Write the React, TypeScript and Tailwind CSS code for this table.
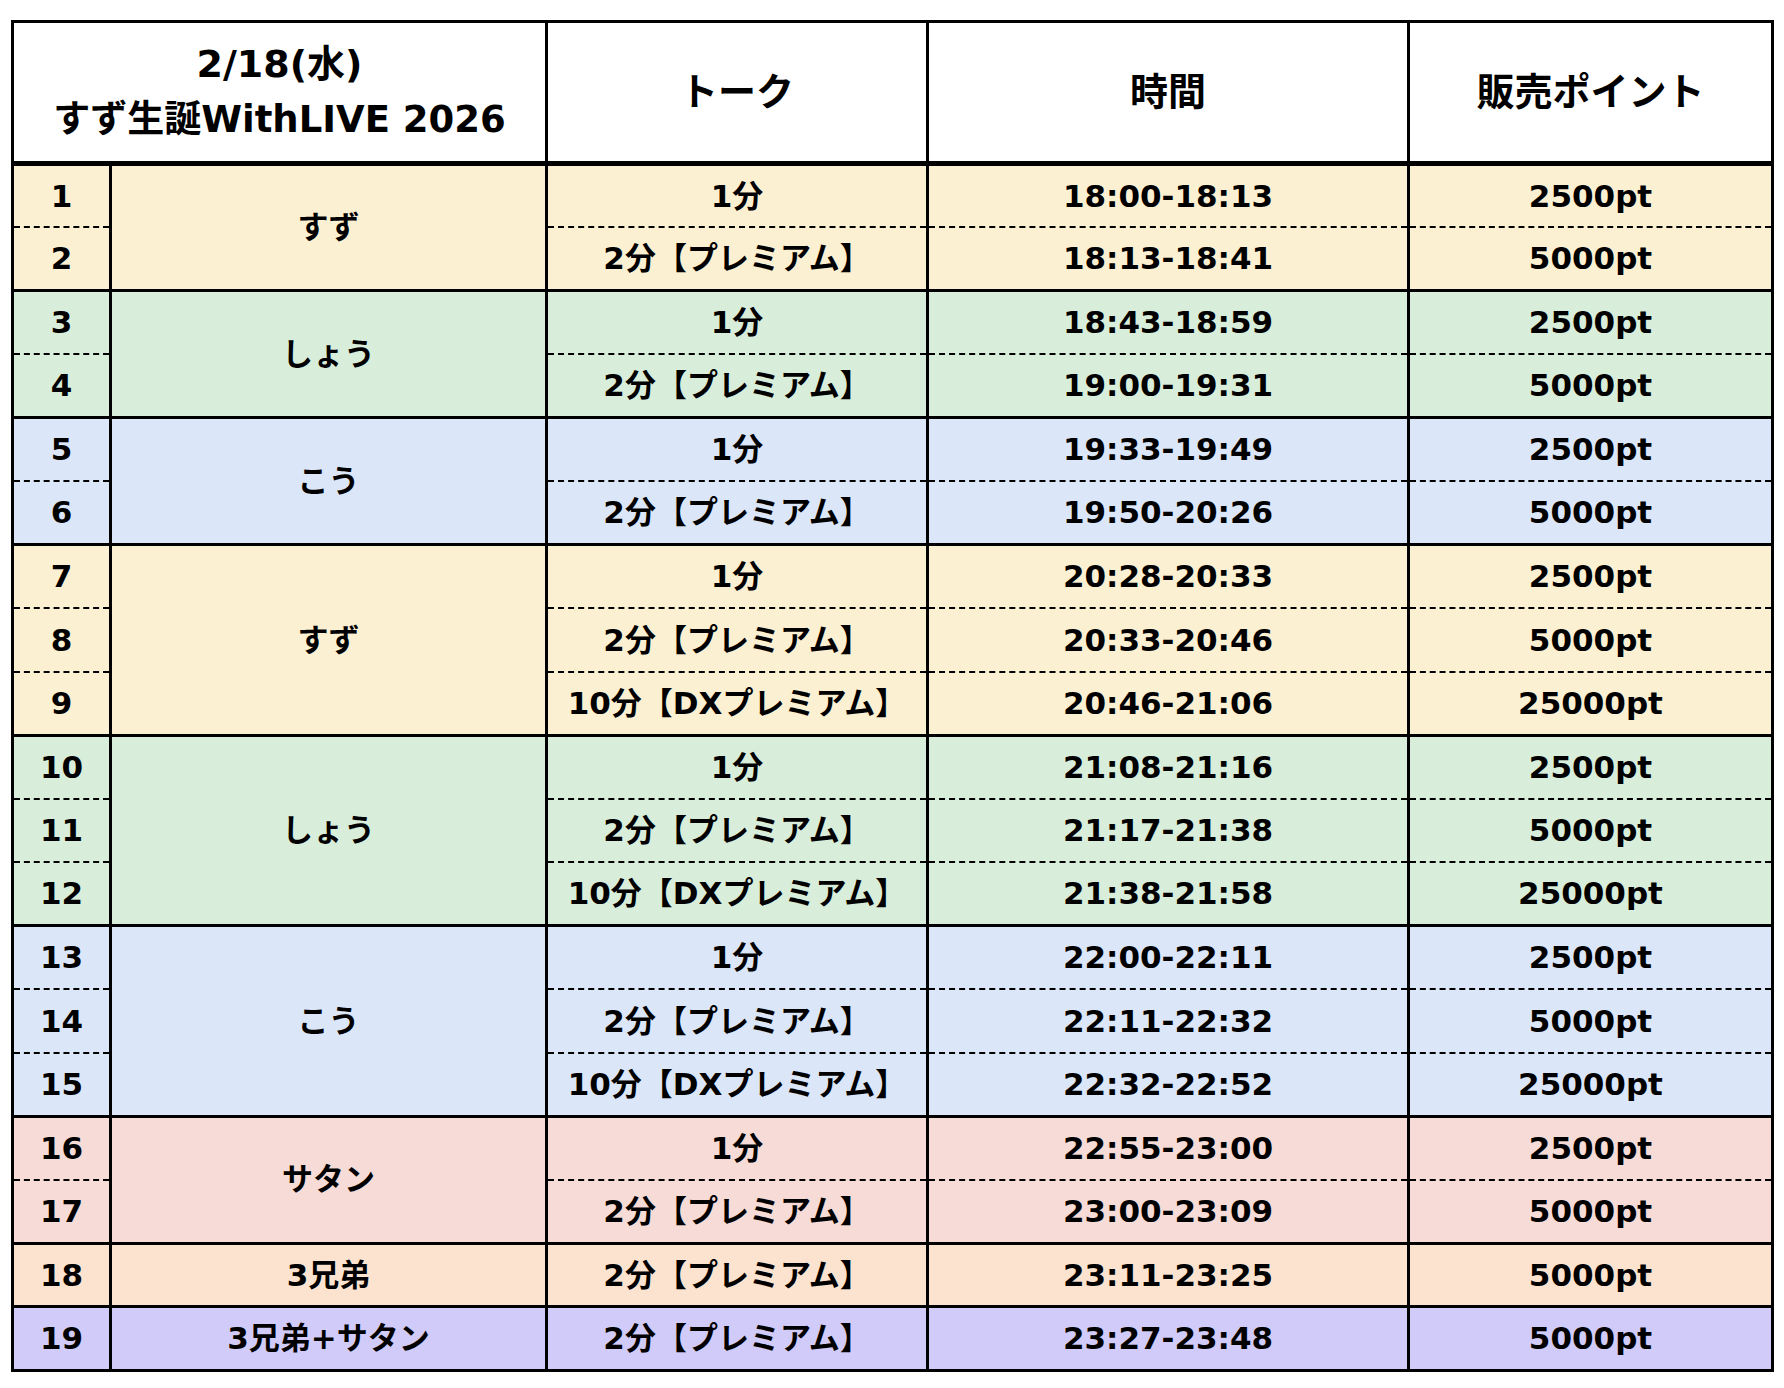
const groups = [
  {
    name: "すず",
    bg: "bg-[#fcf0d3]",
    rows: [
      ["1", "1分", "18:00-18:13", "2500pt"],
      ["2", "2分【プレミアム】", "18:13-18:41", "5000pt"],
    ],
  },
  {
    name: "しょう",
    bg: "bg-[#d8eedb]",
    rows: [
      ["3", "1分", "18:43-18:59", "2500pt"],
      ["4", "2分【プレミアム】", "19:00-19:31", "5000pt"],
    ],
  },
  {
    name: "こう",
    bg: "bg-[#dbe6f9]",
    rows: [
      ["5", "1分", "19:33-19:49", "2500pt"],
      ["6", "2分【プレミアム】", "19:50-20:26", "5000pt"],
    ],
  },
  {
    name: "すず",
    bg: "bg-[#fcf0d3]",
    rows: [
      ["7", "1分", "20:28-20:33", "2500pt"],
      ["8", "2分【プレミアム】", "20:33-20:46", "5000pt"],
      ["9", "10分【DXプレミアム】", "20:46-21:06", "25000pt"],
    ],
  },
  {
    name: "しょう",
    bg: "bg-[#d8eedb]",
    rows: [
      ["10", "1分", "21:08-21:16", "2500pt"],
      ["11", "2分【プレミアム】", "21:17-21:38", "5000pt"],
      ["12", "10分【DXプレミアム】", "21:38-21:58", "25000pt"],
    ],
  },
  {
    name: "こう",
    bg: "bg-[#dbe6f9]",
    rows: [
      ["13", "1分", "22:00-22:11", "2500pt"],
      ["14", "2分【プレミアム】", "22:11-22:32", "5000pt"],
      ["15", "10分【DXプレミアム】", "22:32-22:52", "25000pt"],
    ],
  },
  {
    name: "サタン",
    bg: "bg-[#f6dbd7]",
    rows: [
      ["16", "1分", "22:55-23:00", "2500pt"],
      ["17", "2分【プレミアム】", "23:00-23:09", "5000pt"],
    ],
  },
  {
    name: "3兄弟",
    bg: "bg-[#fbe3cf]",
    rows: [["18", "2分【プレミアム】", "23:11-23:25", "5000pt"]],
  },
  {
    name: "3兄弟+サタン",
    bg: "bg-[#d0cbf8]",
    rows: [["19", "2分【プレミアム】", "23:27-23:48", "5000pt"]],
  },
];

const App = () => {
  return (
    <div className="min-h-screen bg-white pl-[11px] pt-[20px] font-['DejaVu_Sans','Noto_Sans_CJK_JP',sans-serif] text-black">
      <table className="w-[1760px] table-fixed border-collapse border-[3px] border-black text-center font-bold">
        <colgroup>
          <col className="w-[98px]" />
          <col className="w-[436px]" />
          <col className="w-[381px]" />
          <col className="w-[481px]" />
          <col className="w-[364px]" />
        </colgroup>
        <thead>
          <tr className="h-[142px] bg-white">
            <th colSpan={2} className="border-r-[3px] border-b-[5px] border-black align-middle leading-[56px]">
              <div className="text-[38px]">2/18(水)</div>
              <div className="text-[37px]">すず生誕WithLIVE 2026</div>
            </th>
            <th className="border-r-[3px] border-b-[5px] border-black align-middle text-[38px]">トーク</th>
            <th className="border-r-[3px] border-b-[5px] border-black align-middle text-[38px]">時間</th>
            <th className="border-b-[5px] border-black align-middle text-[38px]">販売ポイント</th>
          </tr>
        </thead>
        <tbody className="text-[31px]">
          {groups.map((g) =>
            g.rows.map((r, i) => {
              const last = i === g.rows.length - 1;
              const bottom = last
                ? "border-b-[3px] border-b-black"
                : "border-b-2 border-b-black [border-bottom-style:dashed]";
              return (
                <tr key={r[0]} className={`h-[63.5px] ${g.bg}`}>
                  <td className={`border-solid border-r-[3px] border-r-black ${bottom}`}>{r[0]}</td>
                  {i === 0 && (
                    <td
                      rowSpan={g.rows.length}
                      className="border-solid border-r-[3px] border-b-[3px] border-black"
                    >
                      {g.name}
                    </td>
                  )}
                  <td className={`border-solid border-r-[3px] border-r-black ${bottom}`}>{r[1]}</td>
                  <td className={`border-solid border-r-[3px] border-r-black ${bottom}`}>{r[2]}</td>
                  <td className={`border-solid ${bottom}`}>{r[3]}</td>
                </tr>
              );
            })
          )}
        </tbody>
      </table>
    </div>
  );
};

export default App;
